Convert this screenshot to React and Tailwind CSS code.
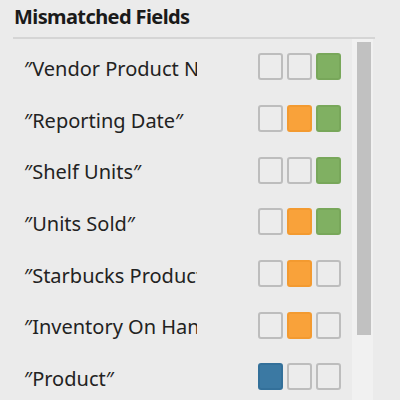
const rows = [
  { name: "″Vendor Product Name″", marks: [null, null, "green"] },
  { name: "″Reporting Date″", marks: [null, "orange", "green"] },
  { name: "″Shelf Units″", marks: [null, null, "green"] },
  { name: "″Units Sold″", marks: [null, "orange", "green"] },
  { name: "″Starbucks Product Name″", marks: [null, "orange", null] },
  { name: "″Inventory On Hand″", marks: [null, "orange", null] },
  { name: "″Product″", marks: ["blue", null, null] },
];

const markClass = {
  green: "bg-[#80b062] border-[#78a75a]",
  orange: "bg-[#f9a23a] border-[#f39a30]",
  blue: "bg-[#3b79a3] border-[#33709a]",
};

const Mark = ({ color }) => (
  <div
    className={`h-[27px] w-[25px] rounded-[3px] border-2 ${
      color ? markClass[color] : "border-[#bdbdbd] bg-[#ececec]"
    }`}
  />
);

export default function App() {
  return (
    <div
      className="h-[400px] w-[400px] overflow-hidden bg-[#ebebeb] text-[#222]"
      style={{ fontFamily: '"Noto Sans", sans-serif' }}
    >
      <div className="pl-[13px] pr-[25px]">
        <h1 className="pt-[3px] pl-[1px] text-[20px] font-bold leading-[28px] tracking-[-0.6px] text-[#1a1a1a]">
          Mismatched Fields
        </h1>
        <div className="mt-[6px] h-[2px] bg-[#d5d5d5]" />
      </div>

      <div className="flex pl-[13px]">
        <div className="w-[339px] pt-[2px]">
          {rows.map((row) => (
            <div key={row.name} className="flex h-[51.7px] items-center">
              <div className="ml-[11px] w-[173px] overflow-hidden whitespace-nowrap pt-[4px] text-[20px]">
                {row.name}
              </div>
              <div className="ml-[61px] flex gap-[4px]">
                {row.marks.map((m, i) => (
                  <Mark key={i} color={m} />
                ))}
              </div>
            </div>
          ))}
        </div>
        <div className="h-[400px] w-[21px] bg-[#f1f1f1] pt-[3px] pl-[5px]">
          <div className="h-[293px] w-[14px] bg-[#c1c1c1]" />
        </div>
      </div>
    </div>
  );
}
